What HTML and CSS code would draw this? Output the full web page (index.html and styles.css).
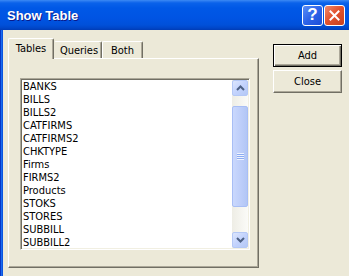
FILE: index.html
```html
<!DOCTYPE html>
<html lang="en">
<head>
  <meta charset="UTF-8">
  <title>Show Table</title>
  <link rel="stylesheet" href="styles.css">
</head>
<body>

  <div class="window">
    <div class="titlebar">
      <span class="title">Show Table</span>
      <div class="caption-buttons">
        <div class="cap-btn help">?</div>
        <div class="cap-btn close">
          <svg width="11" height="11" viewBox="0 0 11 11">
            <path d="M1.5 1.5 L9.5 9.5 M9.5 1.5 L1.5 9.5" stroke="#fff" stroke-width="2" stroke-linecap="square"/>
          </svg>
        </div>
      </div>
    </div>

    <div class="body">
      <div class="tabs-col">
        <div class="tab-strip">
          <div class="tab active">Tables</div>
          <div class="tab q">Queries</div>
          <div class="tab b">Both</div>
        </div>

        <div class="panel">
          <div class="listbox">
            <ul class="items">
              <li>BANKS</li>
              <li>BILLS</li>
              <li>BILLS2</li>
              <li>CATFIRMS</li>
              <li>CATFIRMS2</li>
              <li>CHKTYPE</li>
              <li>Firms</li>
              <li>FIRMS2</li>
              <li>Products</li>
              <li>STOKS</li>
              <li>STORES</li>
              <li>SUBBILL</li>
              <li>SUBBILL2</li>
            </ul>
            <div class="scrollbar">
              <div class="sb-btn">
                <svg width="9" height="6" viewBox="0 0 9 6"><path d="M1 5 L4.5 1.5 L8 5" fill="none" stroke="#4d6185" stroke-width="2"/></svg>
              </div>
              <div class="sb-track">
                <div class="sb-thumb">
                  <span class="grip"></span>
                </div>
              </div>
              <div class="sb-btn">
                <svg width="9" height="6" viewBox="0 0 9 6"><path d="M1 1 L4.5 4.5 L8 1" fill="none" stroke="#4d6185" stroke-width="2"/></svg>
              </div>
            </div>
          </div>
        </div>
      </div>

      <div class="actions">
        <button class="btn default">Add</button>
        <button class="btn">Close</button>
      </div>
    </div>
  </div>

</body>
</html>
```

FILE: styles.css
```css
* {
  margin: 0;
  padding: 0;
  box-sizing: border-box;
}

body {
  font-family: 'DejaVu Sans Condensed', 'DejaVu Sans', sans-serif;
  font-size: 11px;
  color: #000;
  background: #ece9d8;
  width: 349px;
  height: 276px;
  overflow: hidden;
}

.window {
  width: 349px;
  height: 276px;
  display: flex;
  flex-direction: column;
}

/* Luna title bar */
.titlebar {
  height: 30px;
  display: flex;
  align-items: center;
  justify-content: space-between;
  padding: 0 3px 0 7px;
  background: linear-gradient(#3d8cf5 0, #2a7af0 1px, #0a62ea 3px, #0058e6 8px, #0054e3 18px, #0050d9 25px, #0046c8 28px, #003cb5 30px);
}

.title {
  font-family: 'Liberation Sans', sans-serif;
  font-weight: bold;
  font-size: 13px;
  color: #fff;
  text-shadow: 1px 1px 0 #0a1a8a;
  padding-top: 1px;
}

.caption-buttons {
  display: flex;
  gap: 1px;
  margin-right: 1px;
}

.cap-btn {
  width: 21px;
  height: 21px;
  border: 1px solid #fff;
  border-radius: 3px;
  display: flex;
  align-items: center;
  justify-content: center;
  color: #fff;
}

.help {
  background: linear-gradient(135deg, #5b8ef7 0%, #2d63e8 50%, #1c4ed8 100%);
  font-family: 'Liberation Sans', sans-serif;
  font-weight: bold;
  font-size: 17px;
}

.close {
  background: linear-gradient(135deg, #f08a6c 0%, #e2532f 45%, #c9401d 100%);
}

/* window body with the left blue frame */
.body {
  flex: 1;
  display: flex;
  padding: 8px 0 0 8px;
  background: linear-gradient(to right, #0836c4 0, #0836c4 1px, #1a6cef 1px, #1a6cef 2px, #0b54df 2px, #0b54df 3px, #ece9d8 3px);
}

.tabs-col {
  width: 251px;
}

.tab-strip {
  display: flex;
  align-items: flex-end;
  height: 20px;
}

.tab {
  height: 17px;
  padding-top: 2px;
  text-align: center;
  border-top: 1px solid #fff;
  border-left: 1px solid #fff;
  border-right: 1px solid #716f64;
  box-shadow: inset -1px 0 0 #aca899;
  border-radius: 2px 2px 0 0;
  background: #ece9d8;
}

.tab.active {
  position: relative;
  width: 46px;
  height: 21px;
  margin-bottom: -1px;
  padding-top: 3px;
  z-index: 1;
}

.tab.q {
  width: 48px;
  border-left-color: #ece9d8;
  padding-left: 2px;
}

.tab.b {
  width: 41px;
}

.panel {
  height: 210px;
  padding: 19px 0 0 11px;
  border-top: 1px solid #fff;
  border-left: 1px solid #fff;
  border-right: 1px solid #716f64;
  border-bottom: 1px solid #716f64;
  box-shadow: inset -1px -1px 0 #aca899;
}

/* sunken list box */
.listbox {
  width: 230px;
  height: 172px;
  display: flex;
  background: #fff;
  border-top: 1px solid #aca899;
  border-left: 1px solid #aca899;
  border-right: 1px solid #fff;
  border-bottom: 1px solid #fff;
  box-shadow: inset 1px 1px 0 #716f64, inset -1px -1px 0 #f1efe2;
  padding: 1px;
}

.items {
  list-style: none;
  flex: 1;
  padding-left: 1px;
}

.items li {
  height: 13px;
  line-height: 13px;
  white-space: nowrap;
}

.scrollbar {
  width: 16px;
  display: flex;
  flex-direction: column;
  background: linear-gradient(to right, #eeede5, #fbfbf8);
}

.sb-btn {
  height: 16px;
  border: 1px solid #b4c8f6;
  border-radius: 2px;
  background: linear-gradient(135deg, #dce6fd 0%, #c3d3fd 50%, #b4c8f6 100%);
  display: flex;
  align-items: center;
  justify-content: center;
}

.sb-track {
  flex: 1;
  padding-top: 10px;
  padding-bottom: 25px;
  display: flex;
}

.sb-thumb {
  flex: 1;
  border: 1px solid #a8bef5;
  border-radius: 2px;
  background: linear-gradient(to right, #cad8fd, #bccdf9 60%, #b2c6f5);
  display: flex;
  align-items: center;
  justify-content: center;
}

.grip {
  width: 7px;
  height: 7px;
  background: repeating-linear-gradient(#eef3fe 0, #eef3fe 1px, #8cabf2 1px, #8cabf2 2px);
}

/* classic push buttons */
.actions {
  display: flex;
  flex-direction: column;
  gap: 3px;
  margin-left: 14px;
  padding-top: 6px;
}

.btn {
  width: 69px;
  height: 23px;
  font-family: inherit;
  font-size: 11px;
  color: #000;
  background: #ece9d8;
  border-top: 1px solid #fff;
  border-left: 1px solid #fff;
  border-right: 1px solid #716f64;
  border-bottom: 1px solid #716f64;
  box-shadow: inset -1px -1px 0 #aca899;
}

.btn.default {
  border: 1px solid #000;
  box-shadow: inset 1px 1px 0 #fff, inset -1px -1px 0 #716f64, inset -2px -2px 0 #aca899;
}
```
